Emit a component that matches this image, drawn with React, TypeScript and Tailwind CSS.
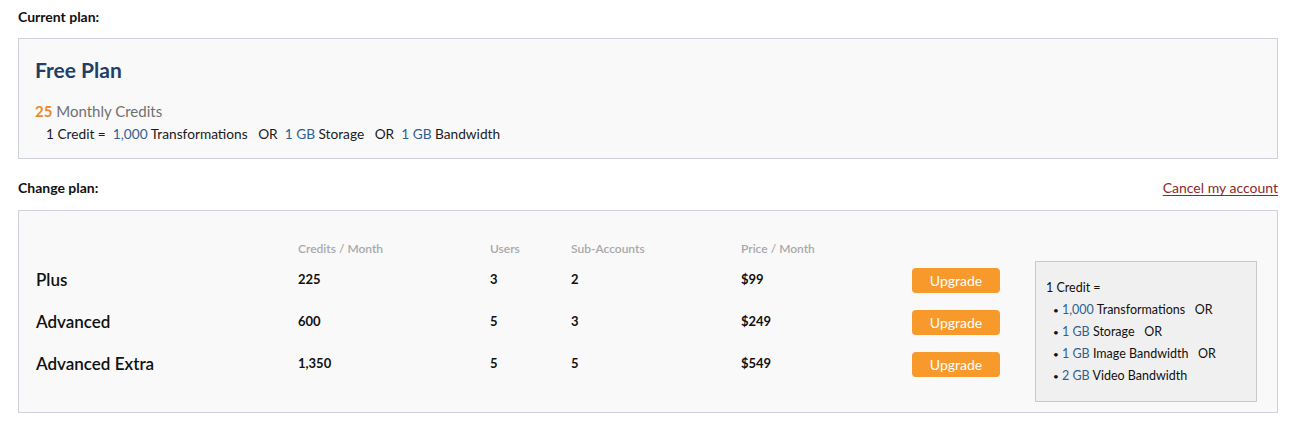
const plans = [
  { name: "Plus", credits: "225", users: "3", subs: "2", price: "$99" },
  { name: "Advanced", credits: "600", users: "5", subs: "3", price: "$249" },
  { name: "Advanced Extra", credits: "1,350", users: "5", subs: "5", price: "$549" },
];

const Blue = ({ children }: { children: React.ReactNode }) => (
  <span className="text-[#2f5f93]">{children}</span>
);

export default function App() {
  return (
    <div className="bg-white min-h-screen pl-[18px] pr-[15px] pt-[9px] text-[#1b1b1b] font-['Lato','Liberation_Sans',sans-serif]">
      <h3 className="text-[14px] leading-4 font-bold text-[#111]">Current plan:</h3>

      <div className="mt-[13px] border border-[#cfd2d8] bg-[#f9f9fa] pl-[16px] pr-4 pt-[19px] pb-[14px]">
        <h2 className="text-[21px] leading-[24px] font-bold text-[#213f66]">Free Plan</h2>
        <div className="mt-[19px] text-[15px] leading-5">
          <span className="font-bold text-[#e8892a]">25</span>{" "}
          <span className="text-[#707070]">Monthly Credits</span>
        </div>
        <div className="mt-[3px] pl-[11px] text-[13.7px] leading-5 whitespace-pre">
          1 Credit =  <Blue>1,000</Blue> Transformations   OR  <Blue>1 GB</Blue> Storage   OR  <Blue>1 GB</Blue> Bandwidth
        </div>
      </div>

      <div className="mt-[19px] flex items-center justify-between">
        <h3 className="text-[14px] leading-4 font-bold text-[#111]">Change plan:</h3>
        <a href="#" className="text-[14px] leading-5 text-[#8b2a2a] underline underline-offset-2">
          Cancel my account
        </a>
      </div>

      <div className="mt-[12px] border border-[#cfd2d8] bg-[#f9f9fa] flex pl-[17px] pr-[20px] pb-[10px]">
        <div className="pt-[28px]">
          <div className="grid grid-cols-[262px_192px_81px_170px_171px_88px] h-5 items-center text-[12px] text-[#a9a9a9] font-semibold">
            <span />
            <span>Credits / Month</span>
            <span>Users</span>
            <span>Sub-Accounts</span>
            <span>Price / Month</span>
            <span />
          </div>
          {plans.map((p) => (
            <div
              key={p.name}
              className="grid grid-cols-[262px_192px_81px_170px_171px_88px] h-[42px] items-center text-[13px] font-bold text-[#111]"
            >
              <span className="text-[17px] font-semibold">{p.name}</span>
              <span>{p.credits}</span>
              <span>{p.users}</span>
              <span>{p.subs}</span>
              <span>{p.price}</span>
              <button className="h-[25px] rounded-[4px] bg-[#f7992b] text-white text-[14px] font-normal">
                Upgrade
              </button>
            </div>
          ))}
        </div>

        <div className="ml-[35px] mt-[50px] w-[222px] border border-[#c9c9c9] bg-[#f0f0f0] pl-[10px] pt-[15px] pb-[14px] text-[12.5px] leading-[22px] text-[#111] whitespace-pre">
          <div>1 Credit =</div>
          <div className="pl-[7px]"><span className="text-[10px]">•</span> <Blue>1,000</Blue> Transformations   OR</div>
          <div className="pl-[7px]"><span className="text-[10px]">•</span> <Blue>1 GB</Blue> Storage   OR</div>
          <div className="pl-[7px]"><span className="text-[10px]">•</span> <Blue>1 GB</Blue> Image Bandwidth   OR</div>
          <div className="pl-[7px]"><span className="text-[10px]">•</span> <Blue>2 GB</Blue> Video Bandwidth</div>
        </div>
      </div>
    </div>
  );
}
